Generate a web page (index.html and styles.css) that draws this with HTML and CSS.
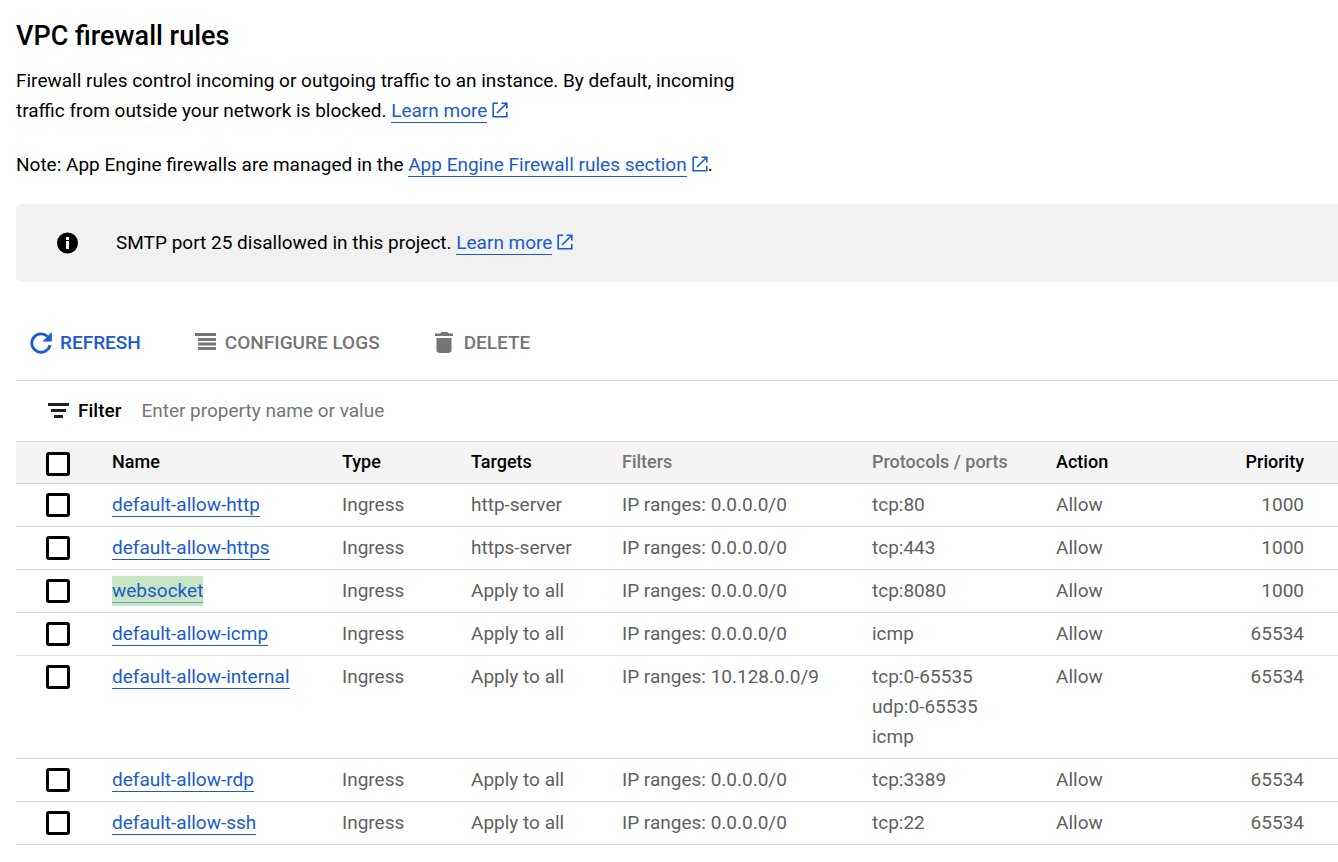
FILE: index.html
```html
<!DOCTYPE html>
<html lang="en">
<head>
<meta charset="utf-8">
<title>VPC firewall rules</title>
<link rel="stylesheet" href="styles.css">
</head>
<body>
<svg width="0" height="0" class="sprite" aria-hidden="true">
  <symbol id="external" viewBox="0 0 16 16">
    <path d="M6 1.200H1.200v13.600h13.600V10M9.500 1.200h5.300v5.300M14.800 1.200L5 11" fill="none" stroke="currentColor" stroke-width="1.600"/>
  </symbol>
</svg>
<main class="page">
  <h1 class="title">VPC firewall rules</h1>
  <p class="intro">Firewall rules control incoming or outgoing traffic to an instance. By default, incoming traffic from outside your network is blocked. <a class="link" href="#">Learn more</a><svg class="external"><use href="#external"/></svg></p>
  <p class="intro">Note: App Engine firewalls are managed in the <a class="link" href="#">App Engine Firewall rules section</a><svg class="external"><use href="#external"/></svg>.</p>

  <aside class="notice">
    <svg class="info" viewBox="0 0 22 22"><circle cx="11" cy="11" r="10.5"/><path d="M9.5 5h3v3h-3zM9.5 9h3v8h-3z" fill="#f1f1f1"/></svg>
    <span>SMTP port 25 disallowed in this project. <a class="link" href="#">Learn more</a><svg class="external"><use href="#external"/></svg></span>
  </aside>

  <div class="toolbar">
    <button class="action primary" type="button">
      <svg class="icon" viewBox="0 0 22 22"><path d="M17.500 4.500A9.200 9.200 0 1 0 20 13" fill="none" stroke="currentColor" stroke-width="2.800"/><path d="M21.800 0V9.500H12.500z" fill="currentColor"/></svg>
      REFRESH
    </button>
    <button class="action" type="button">
      <svg class="icon" viewBox="0 0 22 22"><path d="M0 1h21v3H0zM3 6h18v3H3zM3 10.500h18v3H3zM3 15h18v3H3z" fill="currentColor"/></svg>
      CONFIGURE LOGS
    </button>
    <button class="action" type="button">
      <svg class="icon" viewBox="0 0 22 22"><path d="M1 1.500h5l1.500-1.500h6l1.500 1.500h4v2.500H1zM2.500 6h15v12q0 3-3 3h-9q-3 0-3-3z" fill="currentColor"/></svg>
      DELETE
    </button>
  </div>

  <div class="filter">
    <svg class="icon" viewBox="0 0 22 22"><path d="M0 3h21v3H0zM3 9h15v3H3zM6 15h9v3H6z" fill="#202124"/></svg>
    <label class="filter-label" for="filter">Filter</label>
    <input class="filter-input" id="filter" type="text" placeholder="Enter property name or value">
  </div>

  <table class="rules">
    <colgroup><col class="c-check"><col class="c-name"><col class="c-type"><col class="c-targets"><col class="c-filters"><col class="c-ports"><col></colgroup>
    <thead>
      <tr><th class="check"><input type="checkbox" aria-label="Select all rules"></th><th>Name</th><th>Type</th><th>Targets</th><th class="muted">Filters</th><th class="muted">Protocols / ports</th><th><div class="pair"><span>Action</span><span>Priority</span></div></th></tr>
    </thead>
    <tbody>
      <tr><td class="check"><input type="checkbox" aria-label="default-allow-http"></td><td><a class="link" href="#">default-allow-http</a></td><td>Ingress</td><td>http-server</td><td>IP ranges: 0.0.0.0/0</td><td>tcp:80</td><td><div class="pair"><span>Allow</span><span>1000</span></div></td></tr>
      <tr><td class="check"><input type="checkbox" aria-label="default-allow-https"></td><td><a class="link" href="#">default-allow-https</a></td><td>Ingress</td><td>https-server</td><td>IP ranges: 0.0.0.0/0</td><td>tcp:443</td><td><div class="pair"><span>Allow</span><span>1000</span></div></td></tr>
      <tr><td class="check"><input type="checkbox" aria-label="websocket"></td><td><mark class="highlight"><a class="link" href="#">websocket</a></mark></td><td>Ingress</td><td>Apply to all</td><td>IP ranges: 0.0.0.0/0</td><td>tcp:8080</td><td><div class="pair"><span>Allow</span><span>1000</span></div></td></tr>
      <tr><td class="check"><input type="checkbox" aria-label="default-allow-icmp"></td><td><a class="link" href="#">default-allow-icmp</a></td><td>Ingress</td><td>Apply to all</td><td>IP ranges: 0.0.0.0/0</td><td>icmp</td><td><div class="pair"><span>Allow</span><span>65534</span></div></td></tr>
      <tr><td class="check"><input type="checkbox" aria-label="default-allow-internal"></td><td><a class="link" href="#">default-allow-internal</a></td><td>Ingress</td><td>Apply to all</td><td>IP ranges: 10.128.0.0/9</td><td>tcp:0-65535<br>udp:0-65535<br>icmp</td><td><div class="pair"><span>Allow</span><span>65534</span></div></td></tr>
      <tr><td class="check"><input type="checkbox" aria-label="default-allow-rdp"></td><td><a class="link" href="#">default-allow-rdp</a></td><td>Ingress</td><td>Apply to all</td><td>IP ranges: 0.0.0.0/0</td><td>tcp:3389</td><td><div class="pair"><span>Allow</span><span>65534</span></div></td></tr>
      <tr><td class="check"><input type="checkbox" aria-label="default-allow-ssh"></td><td><a class="link" href="#">default-allow-ssh</a></td><td>Ingress</td><td>Apply to all</td><td>IP ranges: 0.0.0.0/0</td><td>tcp:22</td><td><div class="pair"><span>Allow</span><span>65534</span></div></td></tr>
    </tbody>
  </table>
</main>
</body>
</html>
```
FILE: styles.css
```css
* { box-sizing: border-box; }
body { margin: 0; background: #fff; color: #000; font: 19px/30px Roboto, sans-serif; }
.sprite { position: absolute; }
.page { padding: 16px 0 16px 16px; }
.title { margin: 0 0 10px; font-size: 27px; line-height: 40px; font-weight: 500; }
.intro { margin: 0 0 24px; max-width: 750px; }
.link { color: #1a5bd0; text-decoration: none; border-bottom: 1px solid currentColor; }
.external { width: 16px; height: 16px; margin-left: 5px; color: #1a5bd0; vertical-align: -1px; }

.notice { display: flex; align-items: center; gap: 37px; padding: 24px 40px; background: #f1f1f1; border-radius: 5px 0 0 5px; }
.info { width: 23px; height: 22px; }

.toolbar { display: flex; align-items: center; gap: 54px; padding: 46px 14px 22px; border-bottom: 1px solid #dadada; }
.action { display: flex; align-items: center; gap: 8px; padding: 0; border: 0; background: none; color: #757575; font: 500 19px/30px Roboto, sans-serif; }
.primary { color: #1a5bd0; }
.icon { width: 22px; height: 22px; flex: none; }

.filter { display: flex; align-items: center; padding: 15px 32px; }
.filter-label { margin-left: 8px; font-weight: 500; }
.filter-input { flex: 1; margin-left: 20px; padding: 0; border: 0; outline: 0; background: none; font: inherit; height: 30px; }
.filter-input::placeholder { color: #757575; opacity: 1; }

.rules { width: 100%; table-layout: fixed; border-collapse: separate; border-spacing: 0; border-top: 1px solid #dadada; }
.c-check { width: 96px; }
.c-name { width: 230px; }
.c-type { width: 129px; }
.c-targets { width: 151px; }
.c-filters { width: 250px; }
.c-ports { width: 184px; }
.rules th, .rules td { padding: 6px 0; border-bottom: 1px solid #dadada; text-align: left; vertical-align: top; }
.rules th { padding: 5px 0 6px; background: #f4f4f4; font-size: 18px; font-weight: 500; }
.rules td { color: #5f5f5f; }
.rules .muted { color: #757575; }
.rules .check { padding-left: 30px; }
.check input { display: block; appearance: none; width: 24px; height: 24px; margin: 3px 0; border: 3px solid #000; border-radius: 3px; background: #fff; }
thead .check input { margin: 5px 0 1px; }
.pair { display: flex; justify-content: space-between; padding-right: 34px; }
.highlight { display: inline-block; background: #c8e6c4; vertical-align: top; }
.highlight .link { border-color: #6b9fc0; }
```
